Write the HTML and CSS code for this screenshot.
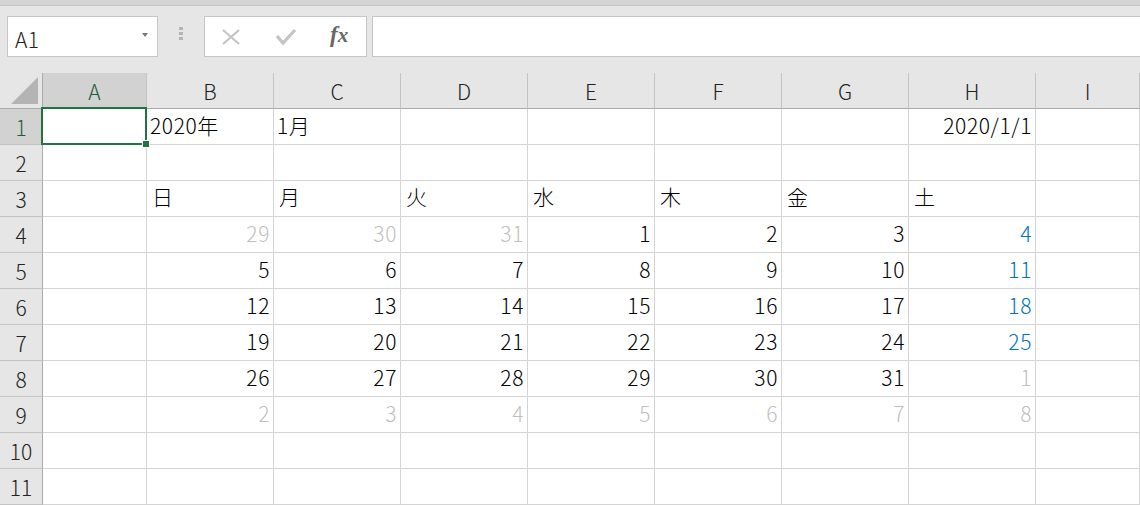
FILE: index.html
```html
<!DOCTYPE html>
<html lang="ja">

<head>
  <meta charset="UTF-8" />
  <title>カレンダー 2020年1月</title>
  <link rel="stylesheet" href="styles.css">
</head>

<body>
  <div class="top-strip"></div>

  <div class="formula-bar">
    <div class="name-box">
      <span class="name-text">A1</span>
      <span class="name-arrow"></span>
    </div>
    <div class="grip">
      <span></span><span></span><span></span>
    </div>
    <div class="fx-buttons">
      <svg class="fx-icon" width="20" height="18" viewBox="0 0 20 18">
        <path d="M2 2 L18 16 M18 2 L2 16" stroke="#c4c4c4" stroke-width="2.2" fill="none" />
      </svg>
      <svg class="fx-icon" width="22" height="18" viewBox="0 0 22 18">
        <path d="M2 8 L8 15 L20 2" stroke="#c4c4c4" stroke-width="3.2" fill="none" />
      </svg>
      <span class="fx-label"><i>f</i><i>x</i></span>
    </div>
    <div class="formula-input"></div>
  </div>

  <div class="sheet">
    <!-- 列見出し -->
    <div class="corner">
      <svg width="28" height="27" viewBox="0 0 28 27">
        <polygon points="27,0 27,27 0,27" fill="#b4b4b4" />
      </svg>
    </div>
    <div class="col-head selected">A</div>
    <div class="col-head">B</div>
    <div class="col-head">C</div>
    <div class="col-head">D</div>
    <div class="col-head">E</div>
    <div class="col-head">F</div>
    <div class="col-head">G</div>
    <div class="col-head">H</div>
    <div class="col-head">I</div>

    <!-- 1 -->
    <div class="row-head selected">1</div>
    <div class="cell active"><span class="cursor"></span></div>
    <div class="cell">2020年</div>
    <div class="cell">1月</div>
    <div class="cell"></div>
    <div class="cell"></div>
    <div class="cell"></div>
    <div class="cell"></div>
    <div class="cell num">2020/1/1</div>
    <div class="cell"></div>

    <!-- 2 -->
    <div class="row-head">2</div>
    <div class="cell"></div>
    <div class="cell"></div>
    <div class="cell"></div>
    <div class="cell"></div>
    <div class="cell"></div>
    <div class="cell"></div>
    <div class="cell"></div>
    <div class="cell"></div>
    <div class="cell"></div>

    <!-- 3 曜日 -->
    <div class="row-head">3</div>
    <div class="cell"></div>
    <div class="cell day">日</div>
    <div class="cell day">月</div>
    <div class="cell day">火</div>
    <div class="cell day">水</div>
    <div class="cell day">木</div>
    <div class="cell day">金</div>
    <div class="cell day">土</div>
    <div class="cell"></div>

    <!-- 4 -->
    <div class="row-head">4</div>
    <div class="cell"></div>
    <div class="cell num other">29</div>
    <div class="cell num other">30</div>
    <div class="cell num other">31</div>
    <div class="cell num">1</div>
    <div class="cell num">2</div>
    <div class="cell num">3</div>
    <div class="cell num sat">4</div>
    <div class="cell"></div>

    <!-- 5 -->
    <div class="row-head">5</div>
    <div class="cell"></div>
    <div class="cell num">5</div>
    <div class="cell num">6</div>
    <div class="cell num">7</div>
    <div class="cell num">8</div>
    <div class="cell num">9</div>
    <div class="cell num">10</div>
    <div class="cell num sat">11</div>
    <div class="cell"></div>

    <!-- 6 -->
    <div class="row-head">6</div>
    <div class="cell"></div>
    <div class="cell num">12</div>
    <div class="cell num">13</div>
    <div class="cell num">14</div>
    <div class="cell num">15</div>
    <div class="cell num">16</div>
    <div class="cell num">17</div>
    <div class="cell num sat">18</div>
    <div class="cell"></div>

    <!-- 7 -->
    <div class="row-head">7</div>
    <div class="cell"></div>
    <div class="cell num">19</div>
    <div class="cell num">20</div>
    <div class="cell num">21</div>
    <div class="cell num">22</div>
    <div class="cell num">23</div>
    <div class="cell num">24</div>
    <div class="cell num sat">25</div>
    <div class="cell"></div>

    <!-- 8 -->
    <div class="row-head">8</div>
    <div class="cell"></div>
    <div class="cell num">26</div>
    <div class="cell num">27</div>
    <div class="cell num">28</div>
    <div class="cell num">29</div>
    <div class="cell num">30</div>
    <div class="cell num">31</div>
    <div class="cell num other">1</div>
    <div class="cell"></div>

    <!-- 9 -->
    <div class="row-head">9</div>
    <div class="cell"></div>
    <div class="cell num other">2</div>
    <div class="cell num other">3</div>
    <div class="cell num other">4</div>
    <div class="cell num other">5</div>
    <div class="cell num other">6</div>
    <div class="cell num other">7</div>
    <div class="cell num other">8</div>
    <div class="cell"></div>

    <!-- 10 -->
    <div class="row-head">10</div>
    <div class="cell"></div>
    <div class="cell"></div>
    <div class="cell"></div>
    <div class="cell"></div>
    <div class="cell"></div>
    <div class="cell"></div>
    <div class="cell"></div>
    <div class="cell"></div>
    <div class="cell"></div>

    <!-- 11 -->
    <div class="row-head">11</div>
    <div class="cell"></div>
    <div class="cell"></div>
    <div class="cell"></div>
    <div class="cell"></div>
    <div class="cell"></div>
    <div class="cell"></div>
    <div class="cell"></div>
    <div class="cell"></div>
    <div class="cell"></div>
  </div>
</body>

</html>
```

FILE: styles.css
```css
body {
  margin: 0;
  width: 1140px;
  height: 505px;
  overflow: hidden;
  background-color: #e6e6e6;
  font-family: "Noto Sans CJK JP", "Noto Sans", sans-serif;
  font-weight: 300;
  color: #000;
}

.top-strip {
  height: 5px;
  background-color: #d4d4d4;
  border-bottom: 1px solid #c6c6c6;
}

/* строка формул */
.formula-bar {
  display: flex;
  align-items: stretch;
  height: 41px;
  padding: 10px 0 16px 7px;
}

.name-box {
  width: 151px;
  box-sizing: border-box;
  background-color: #fff;
  border: 1px solid #c6c6c6;
  display: flex;
  align-items: center;
  justify-content: space-between;
  padding: 0 9px 0 7px;
}

.name-text {
  font-size: 21px;
  letter-spacing: 0.5px;
  color: #222;
  margin-top: 4px;
}

.name-arrow {
  width: 0;
  height: 0;
  border-left: 3px solid transparent;
  border-right: 3px solid transparent;
  border-top: 4px solid #777;
  margin-top: -4px;
}

.grip {
  width: 46px;
  display: flex;
  flex-direction: column;
  align-items: center;
  justify-content: center;
  gap: 2px;
  margin-top: -6px;
}

.grip span {
  width: 4px;
  height: 3px;
  background-color: #b4b4b4;
}

.fx-buttons {
  width: 163px;
  box-sizing: border-box;
  background-color: #fff;
  border: 1px solid #c6c6c6;
  display: flex;
  align-items: center;
  padding: 0 0 0 16px;
  gap: 34px;
}

.fx-label {
  font-family: "Liberation Serif", "DejaVu Serif", serif;
  font-size: 23px;
  font-weight: bold;
  color: #666;
  margin-left: -1px;
  margin-top: -3px;
}

.fx-label i + i {
  font-size: 21px;
  margin-left: 0;
}

.formula-input {
  flex: 1;
  margin-left: 5px;
  background-color: #fff;
  border: 1px solid #c6c6c6;
  border-right: none;
}

/* лист */
.sheet {
  display: grid;
  grid-template-columns: 43px 104px repeat(7, 127px) 1fr;
  grid-template-rows: repeat(12, 36px);
  background-color: #fff;
}

.sheet > div {
  box-sizing: border-box;
  font-size: 21px;
  line-height: 1;
}

.corner {
  background-color: #e6e6e6;
  border-right: 1px solid #ababab;
  border-bottom: 1px solid #ababab;
  display: flex;
  align-items: flex-end;
  justify-content: flex-end;
  padding: 0 3px 4px 0;
}

.col-head {
  background-color: #e6e6e6;
  border-right: 1px solid #c4c4c4;
  border-bottom: 1px solid #ababab;
  display: flex;
  align-items: center;
  justify-content: center;
  color: #222;
  padding-top: 2px;
}

.row-head {
  background-color: #e6e6e6;
  border-right: 1px solid #ababab;
  border-bottom: 1px solid #c4c4c4;
  display: flex;
  align-items: center;
  justify-content: center;
  color: #222;
  padding-top: 2px;
}

.col-head.selected {
  background-color: #d2d2d2;
  border-bottom: 2px solid #217346;
  color: #1e5f3a;
}

.row-head.selected {
  background-color: #d2d2d2;
  color: #1e5f3a;
}

.cell {
  border-right: 1px solid #d4d4d4;
  border-bottom: 1px solid #d4d4d4;
  display: flex;
  align-items: flex-end;
  padding: 0 3px 8px 3px;
  white-space: nowrap;
  letter-spacing: 0.6px;
}

.num {
  justify-content: flex-end;
}

.day {
  padding-left: 5px;
  padding-bottom: 9px;
}

.other {
  color: #bfbfbf;
}

.sat {
  color: #0070c0;
}

/* активная ячейка */
.active {
  position: relative;
}

.active::after {
  content: "";
  position: absolute;
  left: -2px;
  top: -2px;
  right: -1px;
  bottom: -1px;
  border: 2px solid #217346;
}

.cursor {
  position: absolute;
  right: -4px;
  bottom: -4px;
  width: 6px;
  height: 6px;
  background-color: #217346;
  border: 1px solid #fff;
  z-index: 1;
}
```
